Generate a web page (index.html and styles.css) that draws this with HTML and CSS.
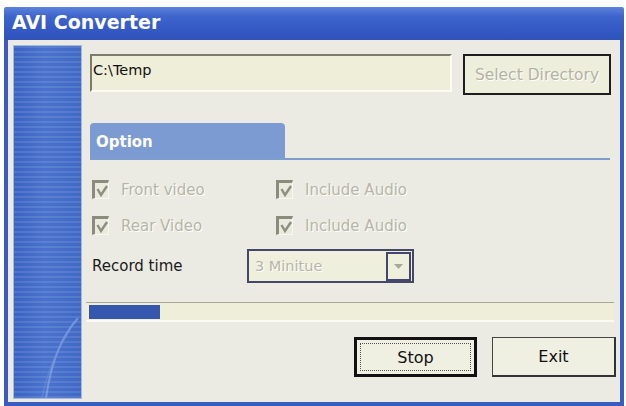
FILE: index.html
```html
<!DOCTYPE html>
<html>
<head>
<meta charset="utf-8">
<link rel="stylesheet" href="styles.css">
</head>
<body>
<div class="window">
  <div class="titlebar">AVI Converter</div>
  <div class="frame">
    <div class="sidebar">
      <svg class="swoosh" width="67" height="80" viewBox="0 0 67 80">
        <path d="M64 0 C50 16 38 38 32 80" fill="none" stroke="#86a6e4" stroke-width="2" opacity="0.7"/>
        <path d="M56 12 C44 30 34 50 28 80" fill="none" stroke="#6f92da" stroke-width="1.5" opacity="0.5"/>
      </svg>
    </div>
    <div class="content">
      <div class="dirrow">
        <div class="textbox">C:\Temp</div>
        <div class="btn-select">Select Directory</div>
      </div>
      <div class="tabs">
        <div class="tab">Option</div>
      </div>
      <div class="options">
        <div class="optrow">
          <div class="opt"><span class="chk"><svg width="12" height="12" viewBox="0 0 12 12"><path d="M1.5 4 L5 10 L11 1" fill="none" stroke="#8e8e80" stroke-width="2.4"/></svg></span><span class="lbl">Front video</span></div>
          <div class="opt"><span class="chk"><svg width="12" height="12" viewBox="0 0 12 12"><path d="M1.5 4 L5 10 L11 1" fill="none" stroke="#8e8e80" stroke-width="2.4"/></svg></span><span class="lbl">Include Audio</span></div>
        </div>
        <div class="optrow">
          <div class="opt"><span class="chk"><svg width="12" height="12" viewBox="0 0 12 12"><path d="M1.5 4 L5 10 L11 1" fill="none" stroke="#8e8e80" stroke-width="2.4"/></svg></span><span class="lbl">Rear Video</span></div>
          <div class="opt"><span class="chk"><svg width="12" height="12" viewBox="0 0 12 12"><path d="M1.5 4 L5 10 L11 1" fill="none" stroke="#8e8e80" stroke-width="2.4"/></svg></span><span class="lbl">Include Audio</span></div>
        </div>
        <div class="recrow">
          <span class="reclbl">Record time</span>
          <div class="combo">
            <span class="combotext">3 Minitue</span>
            <span class="dropbtn"><svg width="9" height="5" viewBox="0 0 9 5"><path d="M0 0 H9 L4.5 5 Z" fill="#a8a898"/></svg></span>
          </div>
        </div>
      </div>
      <div class="progress"><div class="fill" style="width:71px"></div></div>
      <div class="btnrow">
        <div class="btn btn-stop"><span class="focus">Stop</span></div>
        <div class="btn btn-exit">Exit</div>
      </div>
    </div>
  </div>
</div>
</body>
</html>
```

FILE: styles.css
```css
* { box-sizing: border-box; }
html, body { margin: 0; padding: 0; background: #ffffff; }
body { width: 626px; height: 406px; overflow: hidden; font-family: "DejaVu Sans", Verdana, sans-serif; }

.window {
  margin: 7px 2px 0 4px;
  width: 620px;
  height: 399px;
  display: flex;
  flex-direction: column;
}

.titlebar {
  height: 33px;
  background: linear-gradient(to bottom, #5c82dc 0%, #3d63cc 30%, #3459c4 70%, #2f52b8 100%);
  color: #ffffff;
  font-weight: bold;
  font-size: 19px;
  padding: 4px 0 0 8px;
  border-radius: 2px 2px 0 0;
}

.frame {
  flex: 1;
  display: flex;
  background: #ecebe3;
  border-left: 4px solid #3a5cc0;
  border-right: 4px solid #3a5cc0;
  border-bottom: 4px solid #3a5cc0;
  padding: 5px 0 3px 5px;
}

.sidebar {
  width: 69px;
  display: flex;
  flex-direction: column;
  justify-content: flex-end;
  border: 1px solid #a6b8e0;
  background:
    repeating-linear-gradient(to bottom, rgba(255,255,255,0.10) 0 2px, rgba(0,0,0,0) 2px 5px),
    linear-gradient(to right, #3a63c2 0%, #4a72cd 45%, #4069c6 100%);
}
.swoosh { display: block; }

.content {
  flex: 1;
  display: flex;
  flex-direction: column;
  padding: 9px 0 0 8px;
}

.dirrow { display: flex; align-items: flex-start; gap: 11px; }
.textbox {
  width: 362px;
  height: 38px;
  background: #efeed9;
  border-top: 2px solid #7c7b6c;
  border-left: 2px solid #7c7b6c;
  border-bottom: 2px solid #fbfbf4;
  border-right: 2px solid #fbfbf4;
  font-size: 14.5px;
  color: #111;
  padding: 6px 0 0 1px;
}
.btn-select {
  width: 148px;
  height: 41px;
  border: 2px solid #1e1e1e;
  background: #eeeedc;
  color: #b3b3a3;
  text-shadow: 1px 1px 0 #ffffff;
  font-size: 15.5px;
  display: flex;
  align-items: center;
  justify-content: center;
}

.tabs {
  margin-top: 28px;
  width: 520px;
  border-bottom: 2px solid #7d9cd0;
}
.tab {
  width: 195px;
  height: 35px;
  background: #7c9bd2;
  border-radius: 4px 4px 0 0;
  color: #ffffff;
  font-weight: bold;
  font-size: 15px;
  padding: 10px 0 0 6px;
}

.options { padding: 20px 0 0 2px; }
.optrow { display: flex; height: 36px; }
.opt { display: flex; align-items: center; width: 184px; height: 19px; }
.chk {
  width: 17px;
  height: 19px;
  border-top: 3px solid #8c8c7d;
  border-left: 3px solid #8c8c7d;
  border-right: 1px solid #f8f8f0;
  border-bottom: 1px solid #f8f8f0;
  background: #eaeadf;
  display: flex;
  align-items: center;
  justify-content: center;
}
.lbl {
  margin-left: 12px;
  font-size: 15px;
  line-height: 16px;
  color: #b6b6a6;
  text-shadow: 1px 1px 0 #ffffff;
}

.recrow { display: flex; align-items: center; margin-top: -3px; }
.reclbl { width: 155px; font-size: 15px; color: #1a1a1a; }
.combo {
  width: 167px;
  height: 34px;
  border: 2px solid #45476a;
  background: #efefde;
  display: flex;
  align-items: center;
  justify-content: space-between;
}
.combotext {
  padding-left: 6px;
  font-size: 14.5px;
  color: #b6b6a6;
  text-shadow: 1px 1px 0 #ffffff;
}
.dropbtn {
  width: 25px;
  height: 29px;
  border: 2px solid #45476a;
  margin-right: 1px;
  background: #efefde;
  display: flex;
  align-items: center;
  justify-content: center;
}

.progress {
  margin: 19px 0 0 -4px;
  width: 528px;
  height: 20px;
  background: #eeeed9;
  border-top: 1px solid #a8a898;
  border-bottom: 2px solid #fbfbf4;
  padding: 2px 0 0 3px;
}
.fill { height: 14px; background: #3557ad; }

.btnrow {
  display: flex;
  margin: 15px 0 0 264px;
  gap: 15px;
}
.btn {
  width: 123px;
  height: 40px;
  background: #efefe2;
  font-size: 16px;
  color: #111;
  display: flex;
  align-items: center;
  justify-content: center;
}
.btn-stop { border: 3px solid #111; padding: 3px; }
.focus {
  width: 100%;
  height: 100%;
  border: 1px dotted #555;
  display: flex;
  align-items: center;
  justify-content: center;
}
.btn-exit { border: 1px solid #444; border-right: 2px solid #333; border-bottom: 2px solid #333; width: 124px; }
```
